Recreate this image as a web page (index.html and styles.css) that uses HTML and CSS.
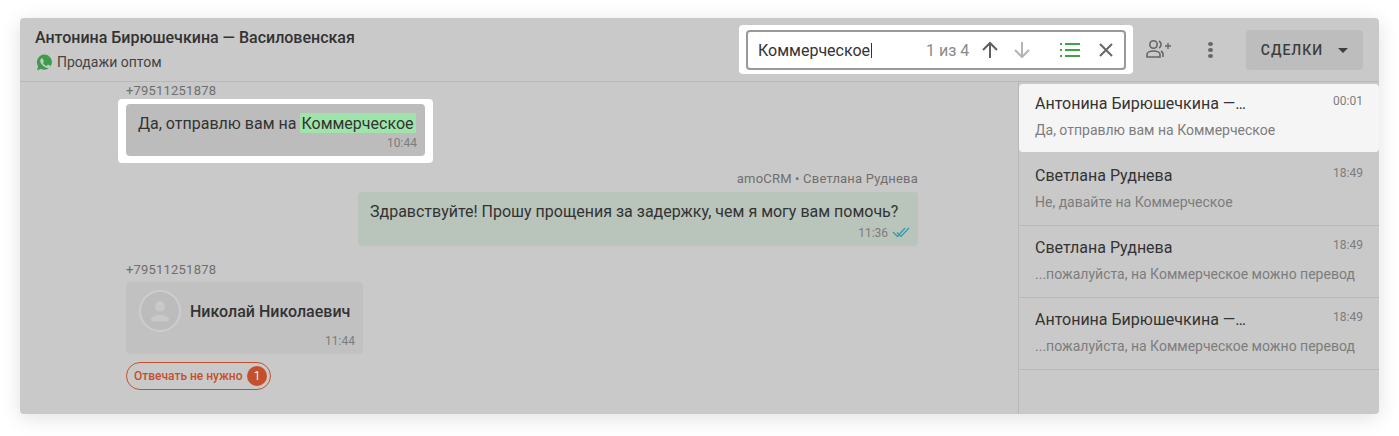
FILE: index.html
```html
<!DOCTYPE html>
<html lang="en">
<head>
  <meta charset="UTF-8" />
  <title>Чат</title>
  <link rel="stylesheet" href="styles.css">
</head>
<body>
  <div class="chat-window">
    <header class="chat-header">
      <div class="contact">
        <div class="contact-name">Антонина Бирюшечкина — Василовенская</div>
        <div class="contact-channel">
          <svg class="wa-icon" width="17" height="17" viewBox="0 0 17 17">
            <path fill="#3f9c4d" d="M8.6.6a7.6 7.6 0 0 0-6.5 11.6L1 16.2l4.1-1.1A7.6 7.6 0 1 0 8.6.6z"/>
            <path fill="#c8c8c8" d="M6 4.3c-.3 0-.7.1-1 .5-.4.5-.8 1.2-.8 2.1 0 1.3 1 2.6 1.2 2.8.2.2 1.8 2.8 4.4 3.8 2.1.8 2.5.6 3 .6.5-.1 1.4-.6 1.6-1.2.2-.5.2-1 .1-1.1l-.5-.3-1.7-.8c-.2-.1-.4-.1-.6.1l-.8 1c-.1.2-.3.2-.5.1-1.2-.5-2.5-1.4-3.4-3-.1-.2 0-.4.1-.5l.7-.9c.1-.2.1-.4 0-.5l-.8-1.9c-.1-.4-.4-.4-.6-.4z"/>
          </svg>
          <span>Продажи оптом</span>
        </div>
      </div>
      <div class="header-tools">
        <div class="search-spot">
          <div class="search-box">
            <span class="search-text">Коммерческое</span>
            <span class="search-count">1 из 4</span>
            <svg class="search-arrow" width="20" height="20" viewBox="0 0 20 20" fill="none" stroke="#5f5f5f" stroke-width="2">
              <path d="M10 18V3M3 10l7-7 7 7"/>
            </svg>
            <svg class="search-arrow" width="20" height="20" viewBox="0 0 20 20" fill="none" stroke="#b4b4b4" stroke-width="2">
              <path d="M10 2v15M3 10l7 7 7-7"/>
            </svg>
            <svg class="search-list" width="20" height="16" viewBox="0 0 20 16" fill="none" stroke="#3fa447" stroke-width="2">
              <path d="M5 2h15M5 8h15M5 14h15M0 2h2M0 8h2M0 14h2"/>
            </svg>
            <svg class="search-close" width="16" height="16" viewBox="0 0 16 16" fill="none" stroke="#666" stroke-width="2">
              <path d="M2 2l12 12M14 2L2 14"/>
            </svg>
          </div>
        </div>
        <svg class="add-user" width="26" height="20" viewBox="0 0 26 20" fill="none" stroke="#666" stroke-width="1.6">
          <circle cx="7.5" cy="5.5" r="3.7"/>
          <path d="M1 18v-2.5c0-2 3-3.5 6.5-3.5s6.5 1.5 6.5 3.5V18z"/>
          <path d="M13 2a4 4 0 0 1 0 7M17 18v-3c0-1-.6-2-2-3"/>
          <path d="M19 7h6M22 4v6" stroke-width="1.4"/>
        </svg>
        <div class="more-dots"><i></i><i></i><i></i></div>
        <button class="deals-btn">СДЕЛКИ<span class="caret"></span></button>
      </div>
    </header>

    <div class="chat-body">
      <main class="messages">
        <div class="msg-author">+79511251878</div>
        <div class="found-spot">
          <div class="bubble bubble-found">
            <div class="bubble-text">Да, отправлю вам на <mark>Коммерческое</mark></div>
            <div class="bubble-time">10:44</div>
          </div>
        </div>

        <div class="msg-author msg-author-out">amoCRM • Светлана Руднева</div>
        <div class="bubble bubble-out">
          <div class="bubble-text">Здравствуйте! Прошу прощения за задержку, чем я могу вам помочь?</div>
          <div class="bubble-time">
            11:36
            <svg class="read-ticks" width="18" height="11" viewBox="0 0 18 11" fill="none" stroke="#2a9eaa" stroke-width="1.2">
              <path d="M1 5l4.5 4.5L13 1M5 5.5l4 4L17 1"/>
            </svg>
          </div>
        </div>

        <div class="msg-author msg-author-third">+79511251878</div>
        <div class="bubble bubble-contact">
          <div class="contact-card">
            <div class="avatar">
              <svg width="24" height="24" viewBox="0 0 24 24" fill="#c9c9c9">
                <circle cx="12" cy="7.5" r="5"/>
                <path d="M3 21c0-3 4-5 9-5s9 2 9 5c0 1-1 1.5-2 1.5H5c-1 0-2-.5-2-1.5z"/>
              </svg>
            </div>
            <div class="card-name">Николай Николаевич</div>
          </div>
          <div class="bubble-time">11:44</div>
        </div>
        <div class="no-reply">
          <span>Отвечать не нужно</span>
          <span class="no-reply-count">1</span>
        </div>
      </main>

      <aside class="results">
        <div class="result result-active">
          <div class="result-top"><span class="result-name">Антонина Бирюшечкина —…</span><span class="result-time">00:01</span></div>
          <div class="result-text">Да, отправлю вам на Коммерческое</div>
        </div>
        <div class="result">
          <div class="result-top"><span class="result-name">Светлана Руднева</span><span class="result-time">18:49</span></div>
          <div class="result-text">Не, давайте на Коммерческое</div>
        </div>
        <div class="result">
          <div class="result-top"><span class="result-name">Светлана Руднева</span><span class="result-time">18:49</span></div>
          <div class="result-text">...пожалуйста, на Коммерческое можно перевод</div>
        </div>
        <div class="result">
          <div class="result-top"><span class="result-name">Антонина Бирюшечкина —…</span><span class="result-time">18:49</span></div>
          <div class="result-text">...пожалуйста, на Коммерческое можно перевод</div>
        </div>
      </aside>
    </div>
  </div>
</body>
</html>
```

FILE: styles.css
```css
:root {
  --bg-dim: #c9c9c9;
  --line: #b8b8b8;
  --text-dark: #333333;
  --text-mid: #6f6f6f;
  --text-soft: #7d7d7d;
  --red: #c5502b;
}

* {
  margin: 0;
  padding: 0;
  box-sizing: border-box;
}

body {
  font-family: Roboto, sans-serif;
  background-color: #ffffff;
  color: var(--text-dark);
  padding: 18px 20px 22px;
  height: 436px;
  overflow: hidden;
}

.chat-window {
  height: 396px;
  background-color: var(--bg-dim);
  border-radius: 4px;
  box-shadow: 0 4px 20px rgba(0, 0, 0, 0.12);
  display: flex;
  flex-direction: column;
}

/* header */
.chat-header {
  height: 64px;
  flex-shrink: 0;
  border-bottom: 1px solid var(--line);
  display: flex;
  justify-content: space-between;
  padding: 0 16px 0 15px;
}

.contact {
  padding-top: 10px;
}

.contact-name {
  font-size: 16px;
  font-weight: 500;
  line-height: 20px;
  color: var(--text-dark);
}

.contact-channel {
  display: flex;
  align-items: center;
  gap: 4px;
  margin-top: 4px;
  font-size: 14px;
  line-height: 20px;
  color: #444444;
}

.wa-icon {
  margin-left: 1px;
}

.header-tools {
  display: flex;
  align-items: flex-start;
}

.search-spot {
  margin-top: 7px;
  width: 394px;
  height: 49px;
  padding: 5px 7px;
  background-color: #ffffff;
  border-radius: 4px;
}

.search-box {
  width: 380px;
  height: 40px;
  border: 2px solid #999999;
  border-radius: 4px;
  display: flex;
  align-items: center;
  padding-left: 10px;
}

.search-text {
  font-size: 16px;
  color: var(--text-dark);
  width: 168px;
}

.search-text::after {
  content: "";
  display: inline-block;
  width: 1px;
  height: 15px;
  margin-left: 1px;
  background-color: #333333;
  vertical-align: -2px;
}

.search-count {
  font-size: 16px;
  color: #8a8a8a;
  width: 43px;
  white-space: nowrap;
}

.search-arrow {
  margin-left: 11px;
}

.search-arrow + .search-arrow {
  margin-left: 12px;
}

.search-list {
  margin-left: 28px;
}

.search-close {
  margin-left: 18px;
}

.add-user {
  margin: 21px 0 0 13px;
}

.more-dots {
  margin: 24px 0 0 36px;
  width: 5px;
  display: flex;
  flex-direction: column;
  gap: 2px;
}

.more-dots i {
  width: 5px;
  height: 4px;
  border-radius: 50%;
  background-color: #666666;
}

.deals-btn {
  margin: 12px 0 0 33px;
  width: 117px;
  height: 40px;
  border: none;
  border-radius: 4px;
  background-color: #bdbdbd;
  color: #3d3d3d;
  font-family: Roboto, sans-serif;
  font-size: 14px;
  font-weight: 500;
  letter-spacing: 1px;
  display: flex;
  align-items: center;
  justify-content: center;
  gap: 15px;
}

.caret {
  width: 0;
  height: 0;
  border-left: 5px solid transparent;
  border-right: 5px solid transparent;
  border-top: 5px solid #3d3d3d;
}

/* messages */
.chat-body {
  flex: 1;
  display: flex;
  min-height: 0;
}

.messages {
  width: 998px;
  flex-shrink: 0;
  padding: 1px 100px 0 106px;
  display: flex;
  flex-direction: column;
  align-items: flex-start;
}

.msg-author {
  font-size: 13px;
  line-height: 16px;
  color: var(--text-mid);
  letter-spacing: 0.2px;
}

.msg-author-out {
  align-self: flex-end;
  margin-top: 8px;
}

.msg-author-third {
  margin-top: 16px;
}

.found-spot {
  margin-left: -8px;
  padding: 5px 8px 7px;
  background-color: #ffffff;
  border-radius: 4px;
}

.bubble {
  border-radius: 4px;
  padding: 8px 8px 5px 12px;
}

.bubble-found {
  background-color: #bcbcbc;
  width: 299px;
}

.bubble-found .bubble-text {
  padding-top: 2px;
}

.bubble-found .bubble-time {
  margin-top: 1px;
}

.bubble-out {
  align-self: flex-end;
  background-color: #b9c4bb;
  margin-top: 5px;
  padding-top: 10px;
  width: 560px;
}

.bubble-text {
  font-size: 16px;
  line-height: 20px;
  color: var(--text-dark);
  white-space: nowrap;
}

.bubble-text mark {
  background-color: #9fe4ab;
  color: var(--text-dark);
  padding: 1px 2px 0 1px;
}

.bubble-time {
  font-size: 12px;
  line-height: 16px;
  color: var(--text-soft);
  text-align: right;
  margin-top: 2px;
}

.bubble-out .bubble-time {
  margin-top: 3px;
}

.read-ticks {
  vertical-align: -1px;
  margin-left: 1px;
}

.bubble-contact {
  background-color: #c1c1c1;
  width: 237px;
  margin-top: 4px;
  padding-left: 13px;
}

.contact-card {
  display: flex;
  align-items: center;
  gap: 9px;
}

.avatar {
  width: 42px;
  height: 42px;
  border-radius: 50%;
  background-color: #bcbcbc;
  border: 2px solid #cdcdcd;
  display: flex;
  align-items: center;
  justify-content: center;
}

.card-name {
  font-size: 16px;
  font-weight: 500;
  padding-top: 1px;
  color: var(--text-dark);
  white-space: nowrap;
}

.bubble-contact .bubble-time {
  margin-top: 1px;
}

.no-reply {
  margin-top: 8px;
  height: 28px;
  width: 145px;
  border: 1px solid var(--red);
  border-radius: 14px;
  display: flex;
  align-items: center;
  justify-content: space-between;
  padding: 0 3px 0 7px;
  font-size: 12px;
  font-weight: 500;
  color: var(--red);
}

.no-reply-count {
  width: 20px;
  height: 20px;
  border-radius: 50%;
  background-color: var(--red);
  color: #f0f0f0;
  display: flex;
  align-items: center;
  justify-content: center;
  font-size: 12px;
  font-weight: 400;
}

/* search results */
.results {
  flex: 1;
  border-left: 1px solid var(--line);
}

.result {
  height: 72px;
  padding: 12px 16px 0 16px;
  border-bottom: 1px solid var(--line);
}

.result-active {
  margin: 2px 0;
  height: 68px;
  background-color: #f5f5f5;
  border-radius: 4px;
  border-bottom: none;
  padding-top: 10px;
}

.result-top {
  display: flex;
  justify-content: space-between;
  align-items: flex-start;
}

.result-name {
  font-size: 16px;
  line-height: 20px;
  color: var(--text-dark);
}

.result-time {
  font-size: 12px;
  line-height: 16px;
  margin-top: -1px;
  color: var(--text-soft);
}

.result-text {
  font-size: 14px;
  line-height: 18px;
  margin-top: 7px;
  color: var(--text-soft);
  white-space: nowrap;
  overflow: hidden;
}
```
